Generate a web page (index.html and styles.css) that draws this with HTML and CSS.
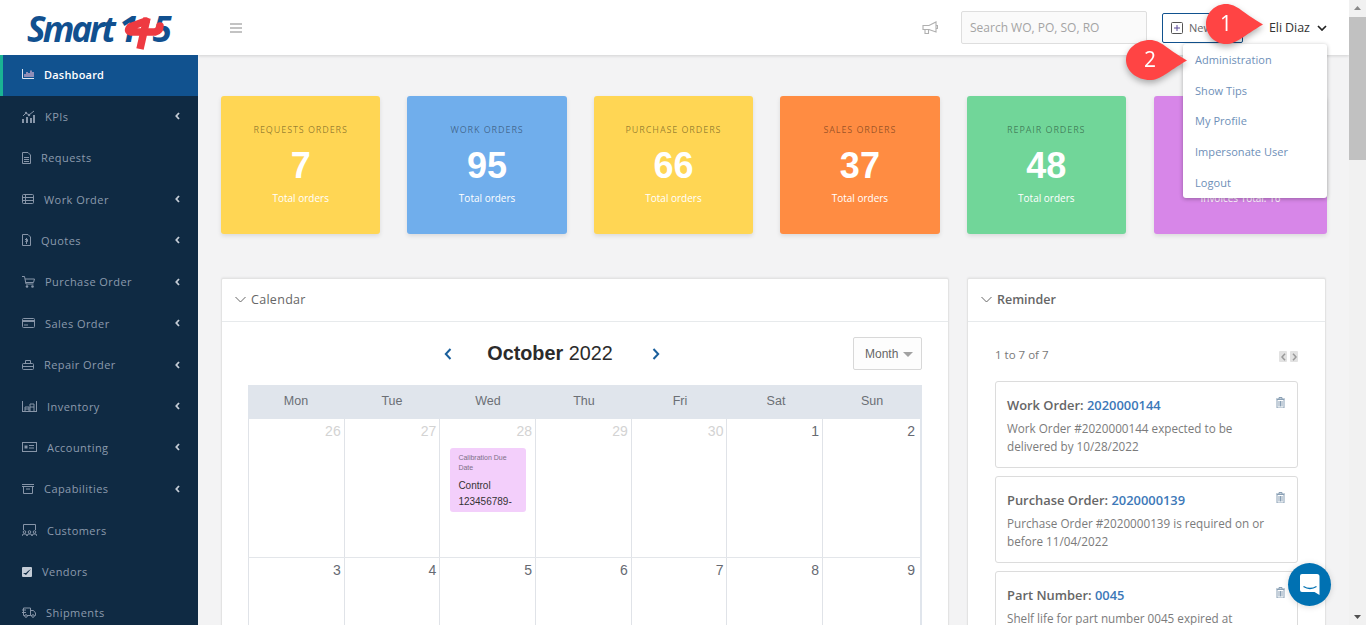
FILE: index.html
```html
<!DOCTYPE html>
<html lang="en">
<head>
<meta charset="utf-8">
<title>Smart 145 Dashboard</title>
<link rel="stylesheet" href="styles.css">
</head>
<body>
<div class="app">
  <aside class="sidebar">
    <div class="logo">
      <span class="logo-smart">Smart</span>
      <span class="logo-num">
        <span class="logo-digits">1<span class="logo-space"></span>5</span>
        <svg class="logo-plus" viewBox="0 0 40 35" width="40" height="35"><path d="M22 5L6 11Q2 16 9 16H31Q36 15 36 10" fill="none" stroke="#ee3a41" stroke-width="7.500" stroke-linecap="round"/><path d="M23 2L16 33" stroke="#ee3a41" stroke-width="7.500"/></svg>
      </span>
    </div>
    <nav class="nav">
      <a class="nav-item active"><svg class="ic" width="12" height="10" viewBox="0 0 12 10"><path d="M.5 0v9.500H12" fill="none" stroke="#dfe6f0"/><path d="M3 5v3M5 3v5M7 4v4M9 1.500v6.500M11 3v5" stroke="#e7b7d2" stroke-width="1.200"/></svg><span>Dashboard</span></a>
      <a class="nav-item"><svg class="ic" width="13" height="13" viewBox="0 0 13 13"><path d="M0 13V9h2v4zM4 13V7h2v6zM8 13V8h2v5zM11 13V5h2v8z" fill="#8795a8"/><path d="M1 6l3-3 3 2 5-4" fill="none" stroke="#8795a8"/><circle cx="4" cy="3" r="1.200" fill="#8795a8"/><circle cx="7" cy="5" r="1.200" fill="#8795a8"/></svg><span>KPIs</span><svg class="caret" width="5" height="8" viewBox="0 0 5 8"><path d="M4 1L1.300 4 4 7" fill="none" stroke="#c4ccd6" stroke-width="1.800"/></svg></a>
      <a class="nav-item"><svg class="ic" width="9" height="12" viewBox="0 0 9 12"><path d="M.5.500h5.500l2.500 2.500v8.500h-8z" fill="none" stroke="#8795a8"/><path d="M2 5.500h5M2 7.500h5M2 9.500h5" stroke="#8795a8"/></svg><span>Requests</span></a>
      <a class="nav-item"><svg class="ic" width="12" height="10" viewBox="0 0 12 10"><rect x=".5" y=".5" width="11" height="9" rx="1" fill="none" stroke="#8795a8"/><path d="M0 3.500h12M0 6.500h12M3.500 0v10" stroke="#8795a8"/></svg><span>Work Order</span><svg class="caret" width="5" height="8" viewBox="0 0 5 8"><path d="M4 1L1.300 4 4 7" fill="none" stroke="#c4ccd6" stroke-width="1.800"/></svg></a>
      <a class="nav-item"><svg class="ic" width="9" height="12" viewBox="0 0 9 12"><path d="M.5.500h5.500l2.500 2.500v8.500h-8z" fill="none" stroke="#8795a8"/><path d="M4.500 4v6M3 5.500h2.500v2H3.300" fill="none" stroke="#8795a8"/></svg><span>Quotes</span><svg class="caret" width="5" height="8" viewBox="0 0 5 8"><path d="M4 1L1.300 4 4 7" fill="none" stroke="#c4ccd6" stroke-width="1.800"/></svg></a>
      <a class="nav-item"><svg class="ic" width="13" height="12" viewBox="0 0 13 12"><path d="M0 .500h2.500l1.500 7.500h7.500M3 3h9.500l-1 3.500H3.700" fill="none" stroke="#8795a8"/><circle cx="5" cy="10.500" r="1.300" fill="#8795a8"/><circle cx="10.500" cy="10.500" r="1.300" fill="#8795a8"/></svg><span>Purchase Order</span><svg class="caret" width="5" height="8" viewBox="0 0 5 8"><path d="M4 1L1.300 4 4 7" fill="none" stroke="#c4ccd6" stroke-width="1.800"/></svg></a>
      <a class="nav-item"><svg class="ic" width="13" height="10" viewBox="0 0 13 10"><rect x=".5" y=".5" width="12" height="9" rx="1" fill="none" stroke="#8795a8"/><path d="M0 3h13" stroke="#8795a8" stroke-width="2"/><path d="M2 7h4" stroke="#8795a8"/></svg><span>Sales Order</span><svg class="caret" width="5" height="8" viewBox="0 0 5 8"><path d="M4 1L1.300 4 4 7" fill="none" stroke="#c4ccd6" stroke-width="1.800"/></svg></a>
      <a class="nav-item"><svg class="ic" width="12" height="10" viewBox="0 0 12 10"><rect x=".5" y="3.500" width="11" height="6" rx="1" fill="none" stroke="#8795a8"/><path d="M3.500 3.500v-3h5v3M0 6.500h12" fill="none" stroke="#8795a8"/></svg><span>Repair Order</span><svg class="caret" width="5" height="8" viewBox="0 0 5 8"><path d="M4 1L1.300 4 4 7" fill="none" stroke="#c4ccd6" stroke-width="1.800"/></svg></a>
      <a class="nav-item"><svg class="ic" width="15" height="11" viewBox="0 0 15 11"><path d="M.5 0v11M14.500 0v11M0 10.500h15M3 10V6h4v4M8 10V3h4v7M3 8h4M8 6h4" fill="none" stroke="#8795a8"/></svg><span>Inventory</span><svg class="caret" width="5" height="8" viewBox="0 0 5 8"><path d="M4 1L1.300 4 4 7" fill="none" stroke="#c4ccd6" stroke-width="1.800"/></svg></a>
      <a class="nav-item"><svg class="ic" width="15" height="10" viewBox="0 0 15 10"><rect x=".5" y=".5" width="14" height="9" fill="none" stroke="#8795a8"/><path d="M2.500 3.500h3v3h-3z" fill="#8795a8"/><path d="M7 3.500h5M7 6h5" stroke="#8795a8"/></svg><span>Accounting</span><svg class="caret" width="5" height="8" viewBox="0 0 5 8"><path d="M4 1L1.300 4 4 7" fill="none" stroke="#c4ccd6" stroke-width="1.800"/></svg></a>
      <a class="nav-item"><svg class="ic" width="12" height="10" viewBox="0 0 12 10"><path d="M0 .500h12M1.500 3v6.500h9V3M0 2.500h12M4 5h4" fill="none" stroke="#8795a8"/></svg><span>Capabilities</span><svg class="caret" width="5" height="8" viewBox="0 0 5 8"><path d="M4 1L1.300 4 4 7" fill="none" stroke="#c4ccd6" stroke-width="1.800"/></svg></a>
      <a class="nav-item"><svg class="ic" width="15" height="12" viewBox="0 0 15 12"><path d="M1.500 6V.500h12V6" fill="none" stroke="#8795a8"/><g fill="none" stroke="#8795a8"><circle cx="2.500" cy="8" r="1.300"/><circle cx="7.500" cy="8" r="1.300"/><circle cx="12.500" cy="8" r="1.300"/><path d="M0 12l1-2h3l1 2M5 12l1-2h3l1 2M10 12l1-2h3l1 2"/></g></svg><span>Customers</span></a>
      <a class="nav-item"><svg class="ic" width="10" height="10" viewBox="0 0 10 10"><rect width="10" height="10" rx="1" fill="#c4ccd6"/><path d="M1 6l3 2 5-6-3 2-2 2z" fill="#0f2a43"/></svg><span>Vendors</span></a>
      <a class="nav-item"><svg class="ic" width="14" height="11" viewBox="0 0 14 11"><path d="M3 8.500H1.500V1h7v7.500H5M8.500 3.500h3L13.500 6v2.500h-1M8.500 8.500H10M0 3h4M0 5.500h4" fill="none" stroke="#8795a8"/><circle cx="4" cy="9" r="1.300" fill="none" stroke="#8795a8"/><circle cx="11" cy="9" r="1.300" fill="none" stroke="#8795a8"/></svg><span>Shipments</span></a>
    </nav>
  </aside>

  <div class="main">
    <header class="topbar">
      <svg class="burger" width="12" height="10" viewBox="0 0 12 10"><path d="M0 1h12M0 5h12M0 9h12" stroke="#888" stroke-width="1.200"/></svg>
      <svg class="megaphone" width="16" height="14" viewBox="0 0 16 14"><path d="M1 4.500h6L14 1v10L7 8.500H1zM3 8.500v4h3.500v-4M14 4.500h1.500v3H14" fill="none" stroke="#b0b0b0" stroke-width="1.100"/></svg>
      <div class="search">Search WO, PO, SO, RO</div>
      <div class="new-btn"><svg width="12" height="12" viewBox="0 0 12 12"><rect x=".5" y=".5" width="11" height="11" rx="1" fill="none" stroke="#555"/><path d="M6 3v6M3 6h6" stroke="#5a4a9a"/></svg><span>New</span></div>
      <div class="user"><span>Eli Diaz</span><svg width="10" height="6" viewBox="0 0 10 6"><path d="M1 1l4 4 4-4" fill="none" stroke="#222" stroke-width="1.700"/></svg></div>
    </header>

    <div class="content">
      <section class="stats">
        <div class="stat yellow"><div class="stat-label">REQUESTS ORDERS</div><div class="stat-num">7</div><div class="stat-sub">Total orders</div></div>
        <div class="stat blue"><div class="stat-label">WORK ORDERS</div><div class="stat-num">95</div><div class="stat-sub">Total orders</div></div>
        <div class="stat yellow"><div class="stat-label">PURCHASE ORDERS</div><div class="stat-num">66</div><div class="stat-sub">Total orders</div></div>
        <div class="stat orange"><div class="stat-label">SALES ORDERS</div><div class="stat-num">37</div><div class="stat-sub">Total orders</div></div>
        <div class="stat green"><div class="stat-label">REPAIR ORDERS</div><div class="stat-num">48</div><div class="stat-sub">Total orders</div></div>
        <div class="stat purple"><div class="stat-label">&nbsp;</div><div class="stat-num">&nbsp;</div><div class="stat-sub">Invoices Total: 16</div></div>
      </section>

      <section class="panels">
        <div class="panel">
          <div class="panel-head"><svg width="11" height="7" viewBox="0 0 11 7"><path d="M.5 1l5 5 5-5" fill="none" stroke="#666"/></svg><span>Calendar</span></div>
          <div class="cal">
            <div class="cal-toolbar">
              <svg class="cal-arrow" width="8" height="12" viewBox="0 0 8 12"><path d="M6.500 1L1.800 6l4.700 5" fill="none" stroke="#1a5f9c" stroke-width="2"/></svg>
              <div class="cal-title"><b>October</b> 2022</div>
              <svg class="cal-arrow" width="8" height="12" viewBox="0 0 8 12"><path d="M1.500 1l4.700 5-4.700 5" fill="none" stroke="#1a5f9c" stroke-width="2"/></svg>
              <div class="cal-view"><span>Month</span><i class="tri"></i></div>
            </div>
            <div class="cal-grid cal-days">
              <div>Mon</div><div>Tue</div><div>Wed</div><div>Thu</div><div>Fri</div><div>Sat</div><div>Sun</div>
            </div>
            <div class="cal-grid cal-week">
              <div class="cell off">26</div><div class="cell off">27</div>
              <div class="cell off">28<div class="event"><div class="event-type">Calibration Due Date</div><div class="event-name">Control 123456789-</div></div></div>
              <div class="cell off">29</div><div class="cell off">30</div><div class="cell">1</div><div class="cell">2</div>
            </div>
            <div class="cal-grid cal-week">
              <div class="cell">3</div><div class="cell">4</div><div class="cell">5</div><div class="cell">6</div><div class="cell">7</div><div class="cell">8</div><div class="cell">9</div>
            </div>
          </div>
        </div>

        <div class="panel">
          <div class="panel-head strong"><svg width="11" height="7" viewBox="0 0 11 7"><path d="M.5 1l5 5 5-5" fill="none" stroke="#666"/></svg><span>Reminder</span></div>
          <div class="rem">
            <div class="rem-top"><span>1 to 7 of 7</span>
              <div class="pager">
                <i><svg width="5" height="8" viewBox="0 0 5 8"><path d="M4 .8L1 4l3 3.200" fill="none" stroke="#9a9a9a" stroke-width="1.500"/></svg></i>
                <i><svg width="5" height="8" viewBox="0 0 5 8"><path d="M1 .8L4 4 1 7.200" fill="none" stroke="#9a9a9a" stroke-width="1.500"/></svg></i>
              </div>
            </div>
            <article class="rem-card">
              <svg class="trash" width="9" height="11" viewBox="0 0 9 11"><path d="M0 2h9M3 2V.5h3V2M1 2.500h7V11H1zM3 4v5.500M4.500 4v5.500M6 4v5.500" fill="none" stroke="#8aa0b5"/></svg>
              <h4>Work Order: <a>2020000144</a></h4>
              <p>Work Order #2020000144 expected to be delivered by 10/28/2022</p>
            </article>
            <article class="rem-card">
              <svg class="trash" width="9" height="11" viewBox="0 0 9 11"><path d="M0 2h9M3 2V.5h3V2M1 2.500h7V11H1zM3 4v5.500M4.500 4v5.500M6 4v5.500" fill="none" stroke="#8aa0b5"/></svg>
              <h4>Purchase Order: <a>2020000139</a></h4>
              <p>Purchase Order #2020000139 is required on or before 11/04/2022</p>
            </article>
            <article class="rem-card">
              <svg class="trash" width="9" height="11" viewBox="0 0 9 11"><path d="M0 2h9M3 2V.5h3V2M1 2.500h7V11H1zM3 4v5.500M4.500 4v5.500M6 4v5.500" fill="none" stroke="#8aa0b5"/></svg>
              <h4>Part Number: <a>0045</a></h4>
              <p>Shelf life for part number 0045 expired at</p>
            </article>
          </div>
        </div>
      </section>
    </div>
  </div>

  <div class="scrollbar">
    <svg width="17" height="17" viewBox="0 0 17 17"><path d="M5 10l3.500-4 3.500 4z" fill="#8a8a8a"/></svg>
    <div class="thumb"></div>
    <svg class="sb-down" width="17" height="17" viewBox="0 0 17 17"><path d="M5 7l3.500 4L12 7z" fill="#505050"/></svg>
  </div>

  <div class="menu">
    <a>Administration</a><a>Show Tips</a><a>My Profile</a><a>Impersonate User</a><a>Logout</a>
  </div>

  <svg class="callout call-one" width="66" height="52" viewBox="0 0 66 52"><path d="M24 3c11 0 17 9 37 20.500C41 35 35 43 24 43 13 43 4 34 4 23S13 3 24 3z" fill="#ff4444"/><text x="24" y="30" text-anchor="middle" class="callout-num">1</text></svg>
  <svg class="callout call-two" width="66" height="52" viewBox="0 0 66 52"><path d="M24 3c11 0 17 9 37 20.500C41 35 35 43 24 43 11 43 0 34 0 23S11 3 24 3z" fill="#ff4444"/><text x="24" y="30" text-anchor="middle" class="callout-num">2</text></svg>

  <div class="chat"><svg width="20" height="22" viewBox="0 0 20 22"><path d="M2 0h15a2.500 2.500 0 0 1 2.500 2.500V21l-5-3H2a2 2 0 0 1-2-2V2a2 2 0 0 1 2-2z" fill="#fff"/><path d="M3.500 12.500c4 2.500 9 2.500 13 0" fill="none" stroke="#0071b2" stroke-width="1.400"/></svg></div>
</div>
</body>
</html>
```

FILE: styles.css
```css
* { box-sizing: border-box; }
html, body { margin: 0; height: 625px; overflow: hidden; }
body { font-family: "Open Sans", "Liberation Sans", sans-serif; background: #f3f3f4; color: #676a6c; }
.app { position: relative; display: flex; width: 1366px; height: 625px; overflow: hidden; }

/* sidebar */
.sidebar { width: 198px; flex: none; background: #0f2a43; position: relative; z-index: 2; }
.logo { height: 55px; background: #fff; display: flex; align-items: center; padding-left: 27px; padding-top: 2px; }
.logo-smart { font: italic 700 35px/1 "Open Sans", sans-serif; letter-spacing: -2.800px; color: #11508f; }
.logo-num { position: relative; display: block; width: 52px; height: 30px; margin-left: 6px; }
.logo-digits { font: italic 700 35px/30px "Open Sans", sans-serif; color: #11508f; letter-spacing: -1px; white-space: nowrap; }
.logo-space { display: inline-block; width: 15px; }
.logo-plus { position: absolute; left: 5px; top: 2px; overflow: visible; }
.nav-item { display: flex; align-items: center; height: 41.400px; padding: 0 18px .8px 22px; gap: 10px; font-size: 11px; letter-spacing: .45px; color: #8c9aad; }
.nav-item span { flex: 1; }
.ic { flex: none; }
.caret { flex: none; }
.nav-item.active { height: 41px; background: #11528f; border-left: 3px solid #1ab394; padding: 0 18px 3px 19px; color: #fff; font-weight: 600; letter-spacing: .2px; }

/* main */
.main { flex: 1; min-width: 0; display: flex; flex-direction: column; }
.topbar { height: 55px; flex: none; background: #fff; display: flex; align-items: center; padding-left: 32px; box-shadow: 0 1px 3px rgba(0,0,0,.14); position: relative; z-index: 1; }
.burger { margin-right: auto; }
.megaphone { margin-right: 23px; }
.search { width: 186px; height: 33px; background: #fafafa; border: 1px solid #dedede; border-radius: 2px; font-size: 12px; line-height: 31px; padding-left: 8px; color: #a4a4a4; margin-right: 15px; }
.new-btn { width: 81px; height: 30px; border: 1px solid #11528f; border-radius: 2px; display: flex; align-items: center; gap: 6px; padding-left: 8px; font-size: 11px; color: #666; margin-right: 26px; }
.user { display: flex; align-items: center; gap: 7px; width: 80px; font-size: 12.500px; color: #333; letter-spacing: -.1px; }

.content { padding: 41px 22px 0 23px; }
.stats { display: grid; grid-template-columns: repeat(5, 1fr) 174px; gap: 27px; }
.stat { height: 138px; border-radius: 3px; box-shadow: 0 2px 4px rgba(0,0,0,.1); text-align: center; padding-top: 28px; }
.stat-label { font-size: 9px; line-height: 12px; letter-spacing: .9px; color: rgba(0,0,0,.42); }
.stat-num { font: 700 36px/36px "Liberation Sans", sans-serif; color: #fff; margin-top: 12px; }
.stat-sub { font-size: 10px; line-height: 12px; font-weight: 500; color: #fff; margin-top: 8px; }
.yellow { background: #ffd654; }
.blue { background: #70aeec; }
.orange { background: #ff8c42; }
.green { background: #71d699; }
.purple { background: #d786e8; margin-left: 1px; }

.panels { display: grid; grid-template-columns: 728px 359px; gap: 18px; margin-top: 44px; }
.panel { background: #fff; border: 1px solid #e3e3e3; border-radius: 2px; height: 400px; box-shadow: 0 -1px 2px rgba(0,0,0,.05); }
.panel-head { height: 43px; border-bottom: 1px solid #e7eaec; display: flex; align-items: center; gap: 5px; padding: 0 0 2px 13px; font-size: 12.500px; color: #666; letter-spacing: .3px; }
.panel-head.strong { font-weight: 600; letter-spacing: 0; color: #666; }

/* calendar */
.cal { padding: 15px 26px 0; font-family: "Liberation Sans", sans-serif; }
.cal-toolbar { position: relative; height: 33px; display: flex; align-items: center; justify-content: center; gap: 35px; padding-right: 66px; margin-bottom: 15px; color: #2b2b2b; }
.cal-title { width: 126px; margin-right: 4px; text-align: center; font-size: 19.800px; white-space: nowrap; }
.cal-view { position: absolute; right: 0; top: 0; width: 69px; height: 33px; border: 1px solid #d8d8d8; border-radius: 2px; background: #fdfdfd; display: flex; align-items: center; gap: 5px; padding-left: 11px; font-size: 12px; color: #666; }
.tri { width: 0; height: 0; border-left: 5.500px solid transparent; border-right: 5.500px solid transparent; border-top: 5px solid #a2a2a2; margin-top: 2px; }
.cal-grid { display: grid; grid-template-columns: repeat(7, 1fr); }
.cal-days { height: 34px; background: #e0e5ec; text-align: center; font-size: 12.500px; line-height: 33px; color: #6b6f75; padding-right: 2px; }
.cal-week { grid-template-columns: repeat(6, 95.700px) 1fr; border-right: 2px solid #e0e5ec; border-bottom: 1px solid #e3e6ea; }
.cell { height: 138px; border-left: 1px solid #e0e3e8; text-align: right; padding: 4px 3px 0 0; font-size: 14px; line-height: 16px; color: #666a72; }
.cell:last-child { padding-right: 5px; }
.cell.off { color: #d3d3d3; }
.event { width: 76px; height: 64px; margin: 9px 0 0 10px; background: #f3cffb; border-radius: 3px; padding: 5px 4px 0 8px; text-align: left; }
.event-type { font-size: 7px; line-height: 10px; color: #7d6f88; }
.event-name { font-size: 10px; line-height: 16px; color: #333; margin-top: 5px; }

/* reminders */
.rem { padding: 23px 27px 0; }
.rem-top { display: flex; justify-content: space-between; align-items: center; font-size: 11.500px; line-height: 20px; color: #787878; height: 20px; margin-bottom: 16px; }
.pager { display: flex; gap: 3px; padding-top: 3px; }
.pager i { width: 8px; height: 11px; background: #e2e2e2; border-radius: 1px; display: flex; align-items: center; justify-content: center; }
.rem-card { position: relative; height: 87px; border: 1px solid #dcdcdc; border-radius: 3px; padding: 14px 11px 0; margin-bottom: 8px; }
.rem-card h4 { margin: 0; font-size: 12.900px; line-height: 18px; font-weight: 600; color: #666; }
.rem-card a { color: #3c78b8; }
.rem-card p { margin: 5px 0 0; max-width: 270px; font-size: 11.700px; line-height: 18px; color: #7b7b7b; }
.trash { position: absolute; right: 12px; top: 15px; }

/* scrollbar */
.scrollbar { width: 17px; flex: none; background: #f1f1f1; display: flex; flex-direction: column; position: relative; z-index: 1; }
.thumb { height: 143px; background: #c1c1c1; }
.sb-down { margin-top: auto; }

/* overlays */
.menu { position: absolute; left: 1183px; top: 44px; width: 144px; height: 154px; background: #fff; border-radius: 3px; box-shadow: 0 1px 4px rgba(0,0,0,.3); padding-top: 1px; z-index: 3; }
.menu a { display: block; height: 30.700px; line-height: 30px; padding-left: 12px; font-size: 11px; letter-spacing: .05px; color: #6e8fb8; }
.callout { position: absolute; z-index: 4; overflow: visible; filter: drop-shadow(0 3px 3px rgba(0,0,0,.3)); }
.call-one { left: 1202px; top: 1px; }
.call-two { left: 1126px; top: 37px; }
.callout-num { font: 500 21px "Open Sans", sans-serif; fill: #fff; }
.chat { position: absolute; left: 1288px; top: 563px; width: 43px; height: 43px; border-radius: 50%; background: #0071b2; box-shadow: 0 1px 6px rgba(0,0,0,.15); display: flex; align-items: center; justify-content: center; z-index: 4; }
```
